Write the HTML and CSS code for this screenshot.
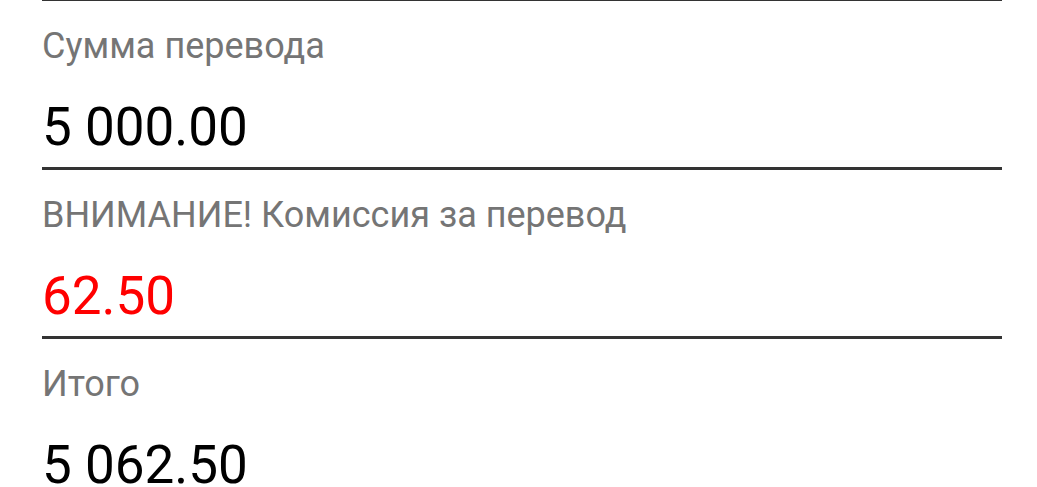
FILE: index.html
```html
<!DOCTYPE html>
<html>
<head>
    <title>Перевод</title>
    <link rel="stylesheet" href="styles.css">
</head>
<body>
    <div class="form">
        <div class="field field-cut"></div>

        <div class="field">
            <div class="label">Сумма перевода</div>
            <div class="value">5 000.00</div>
        </div>

        <div class="field">
            <div class="label">ВНИМАНИЕ! Комиссия за перевод</div>
            <div class="value fee">62.50</div>
        </div>

        <div class="field">
            <div class="label">Итого</div>
            <div class="value">5 062.50</div>
        </div>
    </div>
</body>
</html>
```

FILE: styles.css
```css
body {
    margin: 0;
    background: #fff;
    font-family: Roboto, "Noto Sans", sans-serif;
    overflow: hidden;
}
.form {
    margin-left: 42px;
    width: 960px;
}
.field {
    padding-top: 25px;
    padding-bottom: 10px;
    border-bottom: 3px solid #333;
}
.field-cut {
    padding: 0;
    margin-top: -2px;
}
.label {
    font-size: 36px;
    line-height: 40px;
    color: #757575;
}
.value {
    margin-top: 31px;
    font-size: 53px;
    line-height: 60px;
    color: #000;
}
.fee {
    color: #ff0000;
}
```
